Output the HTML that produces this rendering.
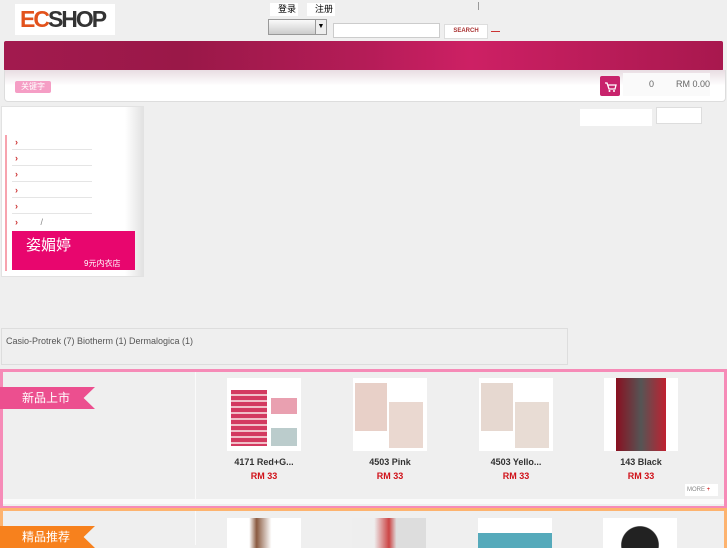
<!DOCTYPE html>
<html><head><meta charset="utf-8"><style>
*{margin:0;padding:0;box-sizing:border-box}
body{width:727px;height:545px;overflow:hidden;background:#efefef;font-family:"Liberation Sans","Noto Sans CJK SC",sans-serif;position:relative}
.a{position:absolute}
.prod{position:absolute;width:74px;text-align:center;font-size:9px;font-weight:bold;color:#333;white-space:nowrap}
.prod .img{width:74px;height:73px;background:#fff;margin:0 auto 6px;position:relative;overflow:hidden}
.prod .p{color:#d0121a;margin-top:4px}
.m{height:16px;border-bottom:1px solid #e5e5e5;color:#c33;font-size:9px;padding-left:3px;line-height:16px;font-weight:bold}
</style></head><body>
<div class="a" style="left:15px;top:4px;width:100px;height:31px;background:#fff"></div>
<div class="a" style="left:20px;top:5px;font-size:23px;font-weight:bold;letter-spacing:-2px;line-height:28px"><span style="color:#e2521c">EC</span><span style="color:#333">SHOP</span></div>
<div class="a" style="left:270px;top:3px;width:28px;height:13px;background:#fff;font-size:9px;padding-left:8px;line-height:13px">登录</div>
<div class="a" style="left:307px;top:3px;width:28px;height:13px;background:#fff;font-size:9px;padding-left:8px;line-height:13px">注册</div>
<div class="a" style="left:478px;top:2px;width:1px;height:8px;background:#999"></div>
<div class="a" style="left:268px;top:19px;width:59px;height:16px;border:1px solid #999;background:linear-gradient(#fafafa,#ccc)"></div>
<div class="a" style="left:315px;top:19px;width:12px;height:16px;border:1px solid #999;background:#eee;font-size:7px;text-align:center;line-height:14px">▼</div>
<div class="a" style="left:333px;top:23px;width:107px;height:15px;background:#fff;border:1px solid #ccc"></div>
<div class="a" style="left:444px;top:24px;width:44px;height:15px;background:#fff;border:1px solid #ddd;font-size:6px;font-weight:bold;color:#a33;text-align:center;line-height:13px">SEARCH</div>
<div class="a" style="left:491px;top:31px;width:9px;height:1px;background:#c33"></div>
<div class="a" style="left:4px;top:41px;width:719px;height:30px;background:linear-gradient(90deg,#a21a4e 0%,#9a1848 25%,#b41c57 50%,#cd2064 65%,#a8184e 100%);border-radius:2px"></div>
<div class="a" style="left:4px;top:70px;width:722px;height:32px;background:linear-gradient(#e8dde2,#fff 50%);border-radius:0 0 4px 4px;border:1px solid #ddd;border-top:none"></div>
<div class="a" style="left:15px;top:81px;width:36px;height:12px;background:#f59ec5;color:#fff;font-size:8px;text-align:center;line-height:12px;border-radius:2px">关键字</div>
<div class="a" style="left:600px;top:76px;width:20px;height:20px;background:#c8236c;border-radius:2px"></div>
<svg class="a" style="left:603px;top:79px" width="14" height="14" viewBox="0 0 14 14"><path d="M2 4h2l2 6h6l1-4H5" stroke="#fff" fill="none" stroke-width="1.3"/><circle cx="6.5" cy="12" r="1" fill="#fff"/><circle cx="11" cy="12" r="1" fill="#fff"/></svg>
<div class="a" style="left:623px;top:73px;width:87px;height:23px;background:#fafafa;font-size:9px;color:#666;line-height:22px;white-space:nowrap;overflow:hidden"><span style="margin-left:26px">0</span><span style="margin-left:22px">RM 0.00</span></div>
<div class="a" style="left:1px;top:106px;width:143px;height:171px;background:#fff;border:1px solid #e2e2e2"></div>
<div class="a" style="left:125px;top:107px;width:18px;height:169px;background:linear-gradient(90deg,#fff,#e2e2e2)"></div>
<div class="a" style="left:5px;top:135px;width:2px;height:136px;background:#f7a3ae"></div>
<div class="a" style="left:12px;top:134px;width:80px">
<div class="m">›</div><div class="m">›</div><div class="m">›</div><div class="m">›</div><div class="m">›</div>
<div class="m" style="border:none">› <span style="color:#888;margin-left:20px;font-weight:normal">/</span></div>
</div>
<div class="a" style="left:12px;top:231px;width:123px;height:39px;background:#e8066e;color:#fff;font-size:15px;padding:3px 0 0 14px">姿媚婷<span style="font-size:8px;position:absolute;left:72px;top:27px">9元内衣店</span></div>
<div class="a" style="left:580px;top:109px;width:72px;height:17px;background:#fff"></div>
<div class="a" style="left:656px;top:107px;width:46px;height:17px;background:#fff;border:1px solid #ddd"></div>
<div class="a" style="left:1px;top:328px;width:567px;height:37px;border:1px solid #ddd;font-size:9px;color:#555;padding:7px 4px">Casio-Protrek (7) Biotherm (1) Dermalogica (1)</div>
<div class="a" style="left:0;top:369px;width:727px;height:140px;border:3px solid #f68bb7;background:#efefef"></div>
<div class="a" style="left:195px;top:372px;width:1px;height:130px;background:#fafafa"></div>
<div class="a" style="left:3px;top:499px;width:721px;height:5px;background:#fafafa"></div>
<div class="a" style="left:0;top:387px;width:95px;height:22px;background:#ec4f8f;color:#fff;font-size:12px;line-height:22px;padding-left:22px;clip-path:polygon(0 0,100% 0,88% 50%,100% 100%,0 100%)">新品上市</div>
<div class="a" style="left:685px;top:484px;width:33px;height:12px;background:#fff;font-size:6px;color:#888;line-height:12px;padding-left:2px">MORE <span style="color:#c00">+</span></div>
<div class="prod" style="left:227px;top:378px"><div class="img"><div class="a" style="left:4px;top:12px;width:36px;height:56px;background:repeating-linear-gradient(#d33a60 0 4px,#f0c0c8 4px 6px)"></div><div class="a" style="left:44px;top:20px;width:26px;height:16px;background:#e9a0b0"></div><div class="a" style="left:44px;top:50px;width:26px;height:18px;background:#bcc"></div></div>4171 Red+G...<div class="p">RM 33</div></div>
<div class="prod" style="left:353px;top:378px"><div class="img"><div class="a" style="left:2px;top:5px;width:32px;height:48px;background:#e8d0c8"></div><div class="a" style="left:36px;top:24px;width:34px;height:46px;background:#ead8d0"></div></div>4503 Pink<div class="p">RM 33</div></div>
<div class="prod" style="left:479px;top:378px"><div class="img"><div class="a" style="left:2px;top:5px;width:32px;height:48px;background:#e6d8d0"></div><div class="a" style="left:36px;top:24px;width:34px;height:46px;background:#e8dcd4"></div></div>4503 Yello...<div class="p">RM 33</div></div>
<div class="prod" style="left:604px;top:378px"><div class="img"><div class="a" style="left:12px;top:0;width:50px;height:73px;background:linear-gradient(90deg,#8a1020,#555 50%,#c02030)"></div></div>143 Black<div class="p">RM 33</div></div>
<div class="a" style="left:0;top:508px;width:727px;height:40px;border:3px solid #fdb36f;border-bottom:none;background:#efefef"></div>
<div class="a" style="left:195px;top:511px;width:1px;height:34px;background:#fafafa"></div>
<div class="a" style="left:0;top:526px;width:95px;height:22px;background:#f7811d;color:#fff;font-size:12px;line-height:22px;padding-left:22px;clip-path:polygon(0 0,100% 0,88% 50%,100% 100%,0 100%)">精品推荐</div>
<div class="a" style="left:227px;top:518px;width:74px;height:30px;background:linear-gradient(90deg,#fff 30%,#8a5a40 40%,#fff 60%)"></div>
<div class="a" style="left:352px;top:518px;width:74px;height:30px;background:linear-gradient(90deg,#eee 30%,#c44 50%,#ddd 60%)"></div>
<div class="a" style="left:478px;top:518px;width:74px;height:30px;background:linear-gradient(#fff 50%,#5ab 50%)"></div>
<div class="a" style="left:603px;top:518px;width:74px;height:30px;background:radial-gradient(circle at 50% 90%,#222 40%,#fff 42%)"></div>
</body></html>
